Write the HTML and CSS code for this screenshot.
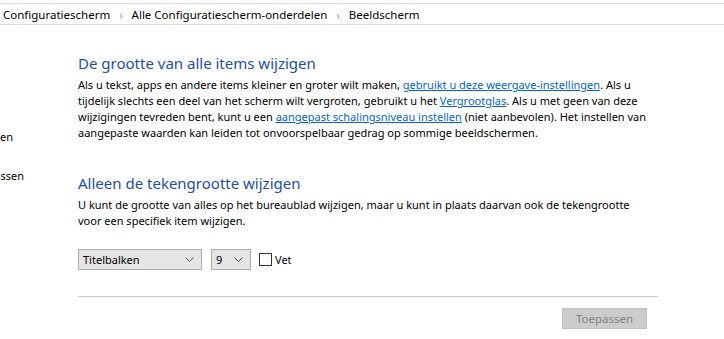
FILE: index.html
```html
<!DOCTYPE html>
<html lang="nl">
<head>
    <meta charset="UTF-8">
    <title>Beeldscherm</title>
    <link rel="stylesheet" href="styles.css">
</head>
<body>
    <div class="breadcrumb">
        <span>Configuratiescherm</span>
        <span class="sep">&#8250;</span>
        <span>Alle Configuratiescherm-onderdelen</span>
        <span class="sep">&#8250;</span>
        <span>Beeldscherm</span>
    </div>
    <div class="layout">
        <div class="sidebar">
            <div class="side-item first"><span>Wijzigen</span></div>
            <div class="side-item second"><span>Aanpassen</span></div>
        </div>
        <div class="main">
            <h2>De grootte van alle items wijzigen</h2>
            <p>Als u tekst, apps en andere items kleiner en groter wilt maken, <a href="#">gebruikt u deze weergave-instellingen</a>. Als u tijdelijk slechts een deel van het scherm wilt vergroten, gebruikt u het <a href="#">Vergrootglas</a>. Als u met geen van deze wijzigingen tevreden bent, kunt u een <a href="#">aangepast schalingsniveau instellen</a> (niet aanbevolen). Het instellen van aangepaste waarden kan leiden tot onvoorspelbaar gedrag op sommige beeldschermen.</p>

            <h2 class="second">Alleen de tekengrootte wijzigen</h2>
            <p>U kunt de grootte van alles op het bureaublad wijzigen, maar u kunt in plaats daarvan ook de tekengrootte voor een specifiek item wijzigen.</p>

            <div class="controls">
                <div class="dropdown wide">
                    <span>Titelbalken</span>
                    <svg width="9" height="6" viewBox="0 0 9 6"><path d="M0.5 0.5 L4.5 4.5 L8.5 0.5" fill="none" stroke="#555" stroke-width="1"/></svg>
                </div>
                <div class="dropdown narrow">
                    <span>9</span>
                    <svg width="9" height="6" viewBox="0 0 9 6"><path d="M0.5 0.5 L4.5 4.5 L8.5 0.5" fill="none" stroke="#555" stroke-width="1"/></svg>
                </div>
                <label class="check"><span class="box"></span>Vet</label>
            </div>

            <div class="footer">
                <button class="apply" disabled>Toepassen</button>
            </div>
        </div>
    </div>
</body>
</html>
```
FILE: styles.css
```css
* {
    box-sizing: border-box;
}
body {
    margin: 0;
    background: #fff;
    font-family: 'Noto Sans', 'Open Sans', sans-serif;
    font-size: 11px;
    color: #000;
    overflow: hidden;
}
.breadcrumb {
    margin-top: 3px;
    height: 22px;
    border-top: 1px solid #dcdcdc;
    border-bottom: 1px solid #dcdcdc;
    display: flex;
    align-items: center;
    padding-left: 3px;
    gap: 9px;
    font-size: 11.5px;
    color: #000;
    white-space: nowrap;
}
.breadcrumb .sep {
    color: #999;
    font-size: 11px;
}
.layout {
    display: flex;
}
.sidebar {
    width: 78px;
    flex-shrink: 0;
}
.side-item {
    display: flex;
    justify-content: flex-end;
    line-height: 16px;
    white-space: nowrap;
}
.side-item.first {
    width: 13px;
    margin-top: 104px;
}
.side-item.second {
    width: 24px;
    margin-top: 23px;
}
.main {
    width: 580px;
}
h2 {
    font-weight: normal;
    font-size: 15px;
    color: #1e4ea6;
    margin: 28px 0 4px;
    line-height: 20px;
}
h2.second {
    margin-top: 32px;
}
p {
    margin: 0;
    max-width: 574px;
    line-height: 16px;
}
a {
    color: #0066cc;
}
.controls {
    display: flex;
    align-items: center;
    margin-top: 20px;
    gap: 9px;
}
.dropdown {
    height: 21px;
    background: #e5e5e5;
    border: 1px solid #adadad;
    display: flex;
    align-items: center;
    justify-content: space-between;
    padding: 0 7px 0 4px;
}
.dropdown.wide {
    width: 124px;
}
.dropdown.narrow {
    width: 40px;
}
.check {
    display: flex;
    align-items: center;
    gap: 3px;
    margin-left: -1px;
}
.check .box {
    width: 13px;
    height: 13px;
    border: 1px solid #333;
    background: #fff;
}
.footer {
    margin-top: 26px;
    border-top: 1px solid #ccc;
    padding-top: 11px;
    display: flex;
    justify-content: flex-end;
    padding-right: 11px;
}
.apply {
    width: 85px;
    height: 21px;
    background: #cccccc;
    border: 1px solid #bfbfbf;
    color: #838383;
    font-family: 'Noto Sans', 'Open Sans', sans-serif;
    font-size: 11.5px;
    padding: 0;
}
```
